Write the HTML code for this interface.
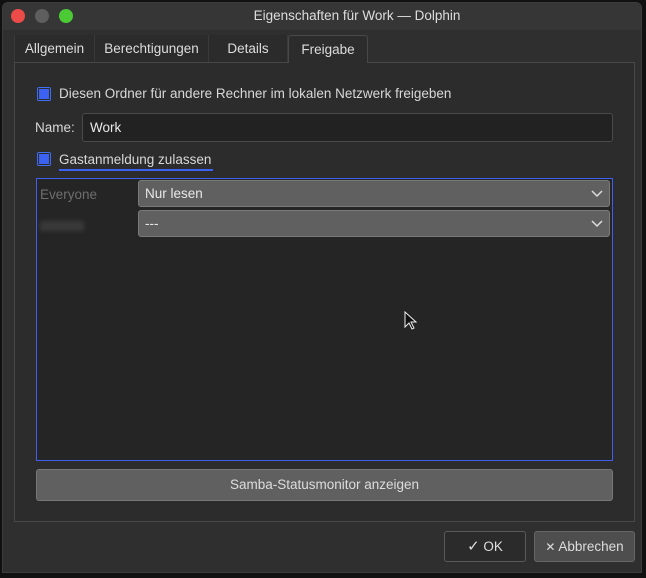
<!DOCTYPE html><html><head><style>
*{box-sizing:border-box;margin:0;padding:0}
body{width:646px;height:578px;background:#111;font-family:"Liberation Sans","DejaVu Sans",sans-serif;font-size:13.5px;color:#d8d8d8;position:relative;overflow:hidden}
.a{position:absolute}
.win{left:2px;top:2px;width:640px;height:571px;background:#2f2f2f;border-radius:6px 6px 0 0;border:1px solid #3c3c3c}
.tb{left:3px;top:3px;width:638px;height:27px;background:#363636;border-radius:6px 6px 0 0}
.dot{width:14px;height:14px;border-radius:50%;top:9px}
.tab{top:35px;height:27px;line-height:27px;text-align:center;background:#2b2b2b;border-right:1px solid #3a3a3a;color:#ddd}
.cb{width:14px;height:14px;border:1px solid #3f6ef0;border-radius:2px;background:#2c2c2c;padding:1px}
.cb i{display:block;width:100%;height:100%;background:#3b62f2}
.combo{left:138px;width:472px;height:27px;background:#606060;border:1px solid #7a7a7a;border-radius:3px;color:#e8e8e8;padding-left:6px;line-height:25px}
.combo svg{position:absolute;right:6px;top:9px}
.btn{height:31px;border:1px solid #5a5a5a;border-radius:3px;text-align:center;line-height:29px;color:#ddd}
</style></head><body>
<div class="a win"></div>
<div class="a tb"></div>
<div class="a dot" style="left:11px;background:#ec4b47"></div>
<div class="a dot" style="left:35px;background:#5e5e5e"></div>
<div class="a dot" style="left:59px;background:#4cca36"></div>
<div class="a" style="left:0;width:646px;top:8px;text-align:center;padding-left:68px;color:#ddd">Eigenschaften für Work — Dolphin</div>
<div class="a" style="left:14px;top:62px;width:621px;height:460px;background:#2c2c2c;border:1px solid #484848"></div>
<div class="a tab" style="left:14px;width:81px;border-left:1px solid #3a3a3a">Allgemein</div>
<div class="a tab" style="left:95px;width:114px">Berechtigungen</div>
<div class="a tab" style="left:209px;width:79px">Details</div>
<div class="a tab" style="left:288px;width:80px;top:35px;height:28px;background:#2c2c2c;border:1px solid #484848;border-bottom:none;border-radius:3px 3px 0 0">Freigabe</div>
<div class="a cb" style="left:37px;top:87px"><i></i></div>
<div class="a" style="left:59px;top:86px">Diesen Ordner für andere Rechner im lokalen Netzwerk freigeben</div>
<div class="a" style="left:35px;top:120px">Name:</div>
<div class="a" style="left:82px;top:113px;width:531px;height:29px;background:#222;border:1px solid #4a4a4a;border-radius:3px;padding-left:7px;line-height:27px;color:#e8e8e8">Work</div>
<div class="a cb" style="left:37px;top:152px"><i></i></div>
<div class="a" style="left:59px;top:152px">Gastanmeldung zulassen</div>
<div class="a" style="left:59px;top:169px;width:154px;height:2px;background:#3b62f2"></div>
<div class="a" style="left:36px;top:178px;width:577px;height:283px;background:#252525;border:1px solid #3f5ff0"></div>
<div class="a" style="left:40px;top:187px;color:#6e6e6e">Everyone</div>
<div class="a" style="left:40px;top:221px;width:44px;height:10px;background:#3a3a3a;filter:blur(2px)"></div>
<div class="a combo" style="top:180px">Nur lesen<svg width="12" height="8"><path d="M1 1l5 5 5-5" stroke="#ddd" stroke-width="1.5" fill="none"/></svg></div>
<div class="a combo" style="top:210px">---<svg width="12" height="8"><path d="M1 1l5 5 5-5" stroke="#ddd" stroke-width="1.5" fill="none"/></svg></div>
<svg class="a" style="left:404px;top:311px" width="14" height="20"><path d="M1 1v15l4-4 3 6 2-1-3-6h5z" fill="#111" stroke="#eee" stroke-width="1"/></svg>
<div class="a btn" style="left:36px;top:469px;width:577px;height:32px;background:#606060;border-color:#777">Samba-Statusmonitor anzeigen</div>
<div class="a btn" style="left:444px;top:531px;width:82px;background:#2b2b2b"><span style="font-size:15px">✓</span> OK</div>
<div class="a btn" style="left:534px;top:531px;width:101px;background:#4e4e4e;border-color:#666"><b style="font-size:12px">✕</b> Abbrechen</div>
</body></html>
